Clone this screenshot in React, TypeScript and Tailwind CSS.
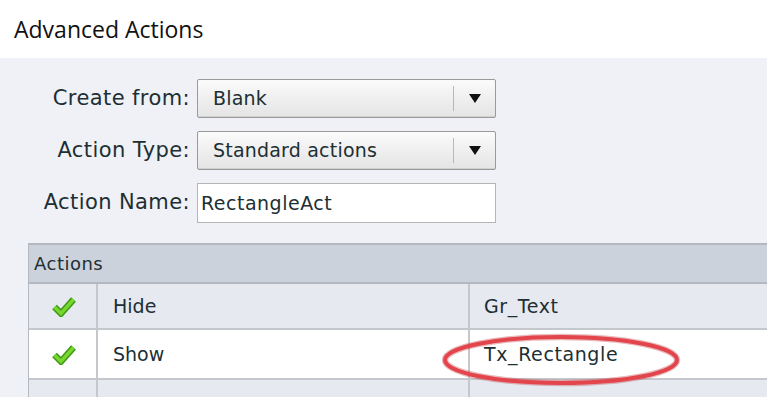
import React from "react";

const FONT = { fontFamily: '"DejaVu Sans", Verdana, sans-serif' };

function Check() {
  return (
    <svg width="24" height="21" viewBox="0 0 24 21" className="block">
      <path d="M2.5 11 L9 17.5 L21.5 3.5" fill="none" stroke="#3c9a14" strokeWidth="6.5" strokeLinejoin="miter" />
      <path d="M2.5 11 L9 17.5 L21.5 3.5" fill="none" stroke="#79d630" strokeWidth="3.5" strokeLinejoin="miter" />
    </svg>
  );
}

function Dropdown({ value }: { value: string }) {
  return (
    <div className="flex h-[39px] w-[299px] items-center rounded-[2px] border border-[#9a9a9a] bg-gradient-to-b from-[#fbfbfb] to-[#e4e4e4] shadow-[inset_0_-1px_0_#d0d0d0]">
      <span className="flex-1 pl-[15px] text-[19px] tracking-[0.2px] text-[#1d2f33]">{value}</span>
      <span className="h-[25px] w-px bg-[#b8b8b8]" />
      <span className="flex w-[41px] justify-center">
        <svg width="12" height="9" viewBox="0 0 12 9"><path d="M0 0 H12 L6 9 Z" fill="#111" /></svg>
      </span>
    </div>
  );
}

function Row({ label, children }: { label: string; children: React.ReactNode }) {
  return (
    <div className="flex items-center">
      <span className="w-[197px] pr-[7px] text-right text-[21px] tracking-[0.4px] text-[#1d2f33]">{label}</span>
      {children}
    </div>
  );
}

export default function App() {
  return (
    <div className="h-[397px] w-[767px] overflow-hidden bg-[#eff1f6]" style={FONT}>
      <div className="flex h-[58px] items-center bg-white pl-[14px]">
        <h1 className="text-[23px] text-[#111]" style={{ fontFamily: '"Open Sans", "Noto Sans", sans-serif' }}>
          Advanced Actions
        </h1>
      </div>

      <div className="flex flex-col gap-[13px] pt-[21px]">
        <Row label="Create from:"><Dropdown value="Blank" /></Row>
        <Row label="Action Type:"><Dropdown value="Standard actions" /></Row>
        <Row label="Action Name:">
          <div className="flex h-[40px] w-[299px] items-center border border-[#b5b5b5] bg-white pl-[3px] text-[19px] tracking-[0.5px] text-[#1d2f33]">
            RectangleAct
          </div>
        </Row>
      </div>

      <div className="relative ml-[28px] mt-[20px] border-l border-t-2 border-[#b4b8c0]">
        <div className="flex h-[39px] items-center border-b-2 border-[#b4b8c0] bg-[#ccd2dc] pl-[5px] text-[18px] tracking-[0.5px] text-[#1d2f33]">
          Actions
        </div>
        {[
          { a: "Hide", b: "Gr_Text", bg: "bg-[#e6e9f0]", check: true, h: "h-[46px]" },
          { a: "Show", b: "Tx_Rectangle", bg: "bg-white", check: true, h: "h-[50px]" },
          { a: "", b: "", bg: "bg-[#e6e9f0]", check: false, h: "h-[40px]" },
        ].map((r, i) => (
          <div key={i} className={`flex ${r.h} ${r.bg} border-b-2 border-[#c4c7cc] text-[19px] text-[#1d2f33]`}>
            <div className="flex w-[69px] items-center justify-center border-r-2 border-[#c4c7cc] pl-[2px]">{r.check && <Check />}</div>
            <div className="flex w-[372px] items-center border-r-2 border-[#c4c7cc] pl-[15px]">{r.a}</div>
            <div className="flex flex-1 items-center pl-[14px] tracking-[0.6px]">{r.b}</div>
          </div>
        ))}
        <svg className="pointer-events-none absolute left-[412px] top-[88px]" width="240" height="54" viewBox="0 0 240 54">
          <ellipse cx="120" cy="27" rx="116" ry="23" fill="none" stroke="#c23a3e" strokeOpacity="0.35" strokeWidth="6.5" />
          <ellipse cx="120" cy="27" rx="116" ry="23" fill="none" stroke="#e2454b" strokeWidth="4" />
        </svg>
      </div>
    </div>
  );
}
